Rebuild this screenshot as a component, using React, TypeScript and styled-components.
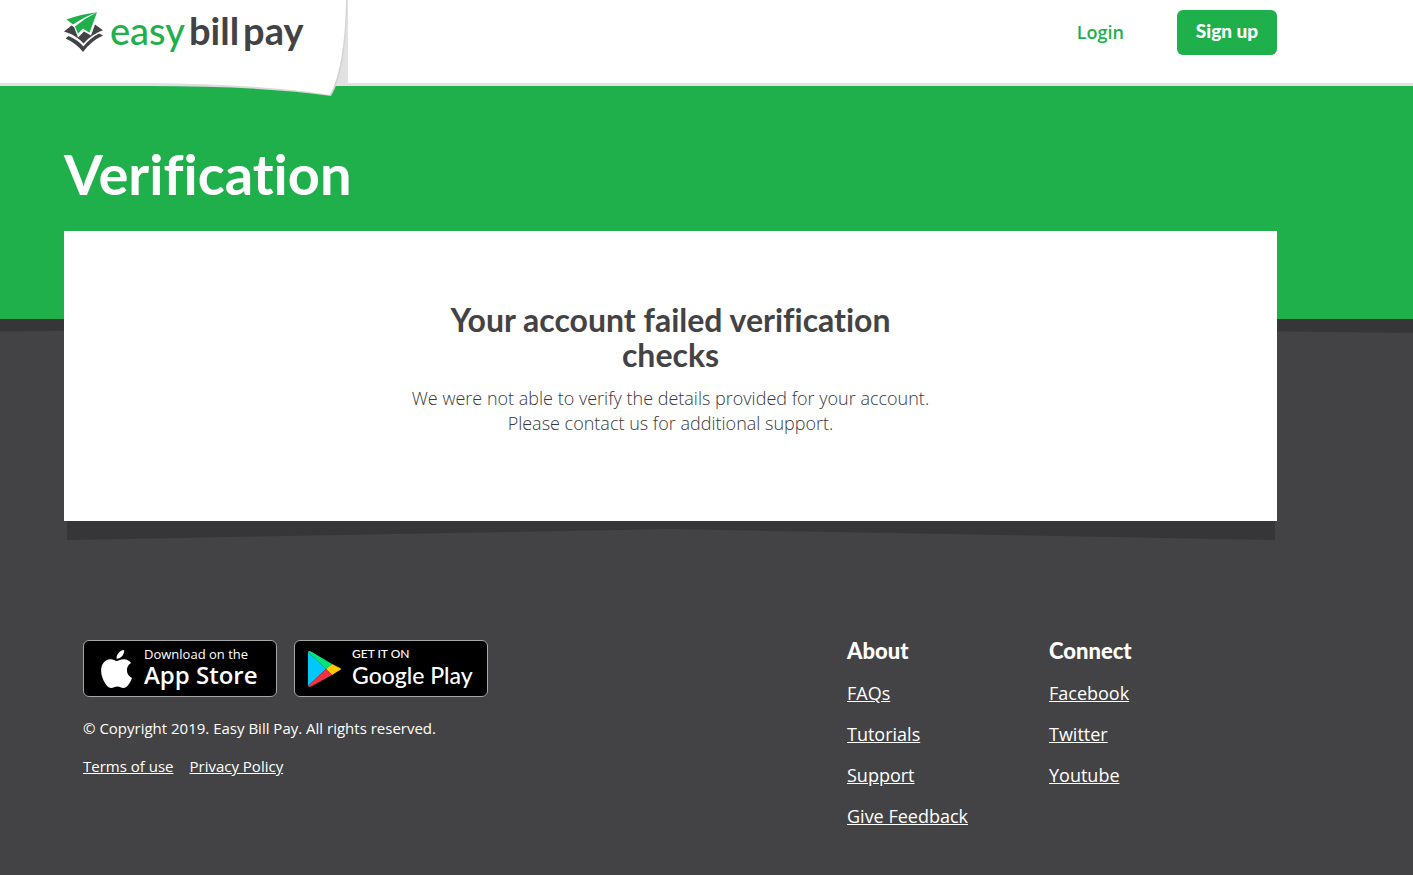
import React from "react";
import styled, { createGlobalStyle } from "styled-components";

const green = "#20b04b";
const charcoal = "#434345";
const shade = "#363638";
const bodyFont = '"Open Sans", "Noto Sans", sans-serif';
const headFont = 'Lato, "Open Sans", sans-serif';

const GlobalStyle = createGlobalStyle`
  * { box-sizing: border-box; }
  html { background: ${charcoal}; }
  body { margin: 0; background: ${charcoal}; color: ${charcoal}; font-family: ${bodyFont}; }
`;

const Header = styled.header`
  position: relative;
  z-index: 1;
  display: flex;
  justify-content: space-between;
  align-items: flex-start;
  height: 86px;
  padding: 10px 136px 0 64px;
  background: #fff;
  border-bottom: 3px solid #e1e1e1;
`;

const PageCurl = styled.svg`
  position: absolute;
  top: 0;
  left: 0;
`;

const Logo = styled.a`
  position: relative;
  display: flex;
  align-items: flex-start;
  text-decoration: none;
`;

const LogoMark = styled.svg`
  margin: 1px 6px 0 0;
`;

const LogoWord = styled.span<{ $green?: boolean }>`
  margin-right: 4px;
  color: ${(p) => (p.$green ? green : charcoal)};
  font: ${(p) => (p.$green ? 500 : 700)} 38px/40px ${headFont};
`;

const Nav = styled.nav`
  display: flex;
  align-items: flex-start;
  gap: 53px;
`;

const LoginLink = styled.a`
  padding-top: 10px;
  color: ${green};
  font-size: 18px;
  font-weight: 600;
  line-height: 24px;
  text-decoration: none;
`;

const SignUpButton = styled.button`
  width: 100px;
  height: 45px;
  padding: 0 0 4px;
  border: 0;
  border-radius: 6px;
  background: ${green};
  color: #fff;
  font: 900 19px/24px ${headFont};
`;

const Hero = styled.section`
  height: 233px;
  padding: 56px 64px 0;
  background: ${green};
`;

const PageTitle = styled.h1`
  margin: 0;
  color: #fff;
  font: 700 56px/64px ${headFont};
  font-variant-ligatures: none;
`;

const HeroShadow = styled.div`
  height: 14px;
  background: ${shade};
  clip-path: polygon(0 0, 100% 0, 100% 100%, 47% 30%, 0 90%);
`;

const Main = styled.main`
  margin: -102px 136px 0 64px;
`;

const Card = styled.section`
  display: flex;
  position: relative;
  flex-direction: column;
  align-items: center;
  min-height: 290px;
  padding: 71px 24px;
  background: #fff;
  text-align: center;
`;

const CardTitle = styled.h2`
  max-width: 500px;
  margin: 0;
  font: 700 32px/35px ${headFont};
  font-variant-ligatures: none;
`;

const CardText = styled.p`
  max-width: 550px;
  margin: 14px 0 0;
  color: #38383a;
  font-size: 18px;
  font-weight: 300;
  line-height: 25px;
`;

const CardShadow = styled.div`
  height: 19px;
  margin: 0 2px 0 3px;
  background: ${shade};
  clip-path: polygon(0 0, 100% 0, 100% 100%, 50% 42%, 0 100%);
`;

const Footer = styled.footer`
  display: flex;
  justify-content: space-between;
  padding: 100px 155px 46px 83px;
  color: #fff;
`;

const Badges = styled.div`
  display: flex;
  gap: 17px;
`;

const Badge = styled.a`
  display: flex;
  align-items: center;
  width: 194px;
  height: 57px;
  padding-left: 12px;
  border: 1px solid #a6a6a6;
  border-radius: 6px;
  background: #000;
  color: #fff;
  text-decoration: none;
  white-space: nowrap;
`;

const BadgeText = styled.span`
  display: flex;
  flex-direction: column;
  margin-left: 10px;
  padding-bottom: 4px;
`;

const BadgeSmall = styled.span<{ $store: "apple" | "google" }>`
  font: 500 13px/16px ${(p) => (p.$store === "apple" ? bodyFont : headFont)};
  font-size: ${(p) => (p.$store === "apple" ? 13 : 12)}px;
`;

const BadgeLarge = styled.span<{ $store: "apple" | "google" }>`
  font: ${(p) => (p.$store === "apple" ? `600 24px/26px ${bodyFont}` : `500 23px/26px ${headFont}`)};
`;

const Copyright = styled.p`
  margin: 19px 0 0;
  font-size: 15px;
  line-height: 24px;
`;

const Legal = styled.div`
  display: flex;
  gap: 16px;
  margin-top: 14px;
  font-size: 15px;
  line-height: 24px;
`;

const FooterLink = styled.a`
  color: #fff;
`;

const LinkColumns = styled.div`
  display: grid;
  grid-template-columns: 202px 209px;
`;

const ColumnTitle = styled.h3`
  margin: 0;
  font: 900 22px/22px ${headFont};
`;

const LinkList = styled.ul`
  margin: 18px 0 0;
  padding: 0;
  list-style: none;
  font-size: 18px;
  line-height: 26px;
`;

const LinkItem = styled.li`
  margin-bottom: 15px;
`;

const columns = [
  { title: "About", links: ["FAQs", "Tutorials", "Support", "Give Feedback"] },
  { title: "Connect", links: ["Facebook", "Twitter", "Youtube"] },
];

export default function App() {
  return (
    <>
      <GlobalStyle />
      <Header>
        <PageCurl width="348" height="98" viewBox="0 0 348 98" aria-hidden="true">
          <defs>
            <linearGradient id="fold" x1="0" x2="1" y1="0" y2="0">
              <stop offset="0" stopColor="#e1e1e1" />
              <stop offset="1" stopColor="#d2d2d2" />
            </linearGradient>
          </defs>
          <path d="M330 0H348V86H330Z" fill="#e1e1e1" />
          <path d="M150 86Q260 86 331 96Q346 72 347 0H150Z" fill="url(#fold)" />
          <path d="M0 83H150Q260 84 330 95Q345 66 346 0H0Z" fill="#fff" />
        </PageCurl>
        <Logo href="#" aria-label="easybillpay">
          <LogoMark width="40" height="42" viewBox="0 0 40 42" aria-hidden="true">
            <path d="M0 20.5L7.5 14.5L10 16L14 26.5L20 20.5L27 24.5L31 13.5L39 19.3Q28 23 19.5 32.5Q12 24 0 20.5Z" fill={charcoal} />
            <path d="M1.500 27.500L4.500 25Q14 29 19.500 35.500Q26 27 35 22.500L39 24.500Q27 30 19 41Q12 32 1.500 27.500Z" fill={charcoal} />
            <path d="M2.5 8.5Q17 3 33 1.2Q19 6.5 9 13.5Z" fill={green} />
            <path d="M33 1.2L25.5 21.7L19 17.5L14 22.8L11 15.5Q21 7 33 1.2Z" fill={green} />
          </LogoMark>
          <LogoWord $green>easy</LogoWord>
          <LogoWord>bill</LogoWord>
          <LogoWord>pay</LogoWord>
        </Logo>
        <Nav>
          <LoginLink href="#">Login</LoginLink>
          <SignUpButton type="button">Sign up</SignUpButton>
        </Nav>
      </Header>
      <Hero>
        <PageTitle>Verification</PageTitle>
      </Hero>
      <HeroShadow />
      <Main>
        <Card>
          <CardTitle>Your account failed verification checks</CardTitle>
          <CardText>
            We were not able to verify the details provided for your account.
            <br />
            Please contact us for additional support.
          </CardText>
        </Card>
        <CardShadow />
      </Main>
      <Footer>
        <div>
          <Badges>
            <Badge href="#">
              <svg width="38" height="38" viewBox="-1 0 24 24" fill="#fff" aria-hidden="true">
                <path d="M12.15 6.9c-.95 0-2.42-1.08-3.96-1.04-2.04.03-3.91 1.18-4.96 3.01-2.12 3.68-.55 9.1 1.52 12.09 1.01 1.45 2.21 3.09 3.79 3.04 1.52-.07 2.09-.99 3.94-.99 1.83 0 2.35.99 3.96.95 1.64-.03 2.68-1.48 3.68-2.95 1.16-1.69 1.64-3.33 1.66-3.41-.04-.01-3.18-1.22-3.22-4.86-.03-3.04 2.48-4.49 2.6-4.56-1.43-2.09-3.62-2.32-4.39-2.38-2-.16-3.68 1.09-4.61 1.09zM15.53 3.83c.84-1.01 1.4-2.43 1.25-3.83-1.21.05-2.66.81-3.53 1.82-.78.9-1.45 2.34-1.27 3.71 1.34.1 2.72-.69 3.56-1.7" />
              </svg>
              <BadgeText>
                <BadgeSmall $store="apple">Download on the</BadgeSmall>
                <BadgeLarge $store="apple">App Store</BadgeLarge>
              </BadgeText>
            </Badge>
            <Badge href="#">
              <svg width="35" height="38" viewBox="0 0 35 38" aria-hidden="true">
                <path d="M1 2V36L19 19Z" fill="#00c8fa" />
                <path d="M1 2Q2 0 5 2L25 14L19 19Z" fill="#00e676" />
                <path d="M25 14L33 18Q35 19 33 20L25 25L19 19Z" fill="#ffc800" />
                <path d="M1 36Q2 38 5 36L25 25L19 19Z" fill="#f03246" />
              </svg>
              <BadgeText>
                <BadgeSmall $store="google">GET IT ON</BadgeSmall>
                <BadgeLarge $store="google">Google Play</BadgeLarge>
              </BadgeText>
            </Badge>
          </Badges>
          <Copyright>© Copyright 2019. Easy Bill Pay. All rights reserved.</Copyright>
          <Legal>
            <FooterLink href="#">Terms of use</FooterLink>
            <FooterLink href="#">Privacy Policy</FooterLink>
          </Legal>
        </div>
        <LinkColumns>
          {columns.map((c) => (
            <div key={c.title}>
              <ColumnTitle>{c.title}</ColumnTitle>
              <LinkList>
                {c.links.map((l) => (
                  <LinkItem key={l}>
                    <FooterLink href="#">{l}</FooterLink>
                  </LinkItem>
                ))}
              </LinkList>
            </div>
          ))}
        </LinkColumns>
      </Footer>
    </>
  );
}
